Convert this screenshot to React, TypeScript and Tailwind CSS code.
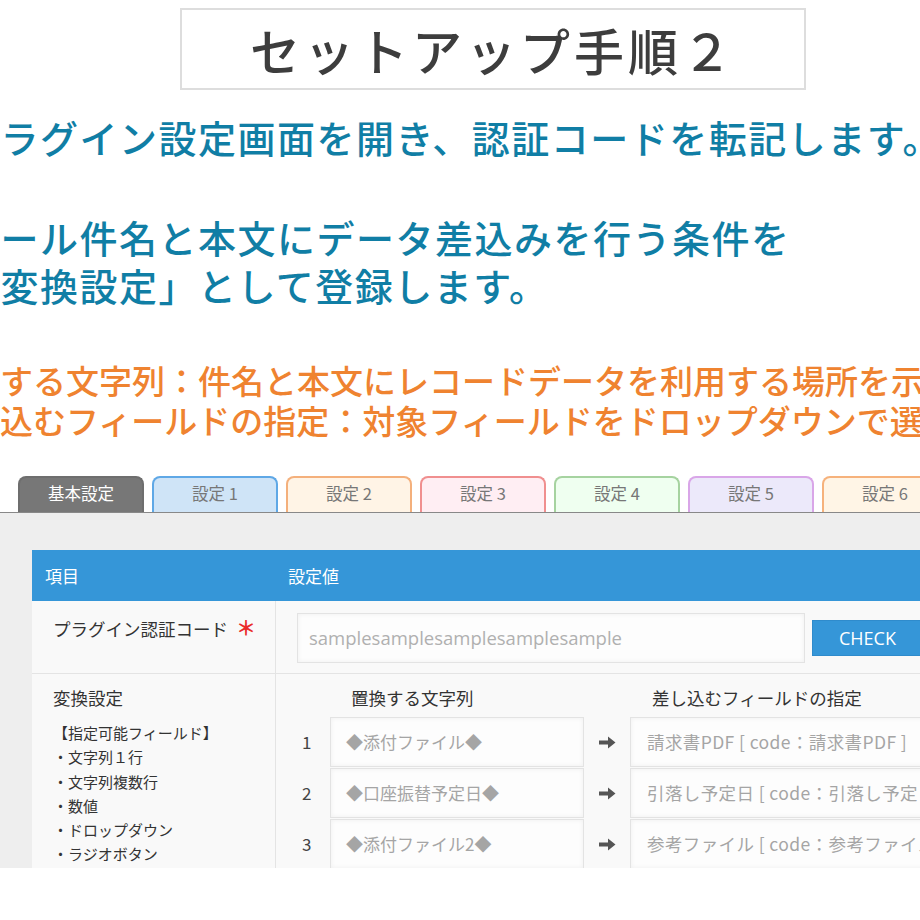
const jp = { fontFamily: '"Noto Sans CJK JP", "Noto Sans", sans-serif' }

const tabs = [
  { label: '基本設定', cls: 'bg-[#777777] border-[#6e6e6e] text-white' },
  { label: '設定 1', cls: 'bg-[#cfe4f7] border-[#5fa8e6] text-[#777777]' },
  { label: '設定 2', cls: 'bg-[#fff4e6] border-[#f4b07c] text-[#777777]' },
  { label: '設定 3', cls: 'bg-[#ffeef3] border-[#f08f8f] text-[#777777]' },
  { label: '設定 4', cls: 'bg-[#effff0] border-[#a6d3a0] text-[#777777]' },
  { label: '設定 5', cls: 'bg-[#ece9fa] border-[#d9a6e8] text-[#777777]' },
  { label: '設定 6', cls: 'bg-[#fff5e6] border-[#f6b27c] text-[#777777]' },
]

const rows = [
  { n: '1', from: '◆添付ファイル◆', to: '請求書PDF [ code：請求書PDF ]' },
  { n: '2', from: '◆口座振替予定日◆', to: '引落し予定日 [ code：引落し予定日 ]' },
  { n: '3', from: '◆添付ファイル2◆', to: '参考ファイル [ code：参考ファイル ]' },
]

const fields = ['・文字列１行', '・文字列複数行', '・数値', '・ドロップダウン', '・ラジオボタン', '・チェックボックス']

function Arrow() {
  return (
    <svg width="17" height="13" viewBox="0 0 17 13">
      <path d="M0 4.5 H9 V0.5 L16.5 6.5 L9 12.5 V8.5 H0 Z" fill="#555555" />
    </svg>
  )
}

export default function App() {
  return (
    <div className="w-[920px] h-[920px] overflow-hidden bg-white" style={jp}>
      {/* title */}
      <div className="mt-[8px] ml-[180px] w-[626px] h-[82px] border-2 border-[#dddddd] flex items-center justify-center">
        <span className="text-[50px] leading-none tracking-[4px] font-medium text-[#3d3d3d]">セットアップ手順２</span>
      </div>

      {/* blue */}
      <div className="mt-[23px] text-[38px] leading-[48px] font-medium text-[#107ea5] whitespace-nowrap tracking-[1.5px]">
        <div className="ml-[-39px]">プラグイン設定画面を開き、認証コードを転記します。</div>
        <div className="ml-[-39px] mt-[52px]">メール件名と本文にデータ差込みを行う条件を</div>
        <div className="ml-[-39px]">「変換設定」として登録します。</div>
      </div>

      {/* orange */}
      <div className="mt-[51px] text-[33px] leading-[40px] font-medium text-[#ef8330] whitespace-nowrap">
        <div className="ml-[-66px]">置換する文字列：件名と本文にレコードデータを利用する場所を示します。</div>
        <div className="ml-[-66px]">差し込むフィールドの指定：対象フィールドをドロップダウンで選択します。</div>
      </div>

      {/* tabs */}
      <div className="mt-[36px] flex gap-[8px] pl-[18px] border-b border-[#888888] h-[37px] overflow-hidden">
        {tabs.map((t) => (
          <div
            key={t.label}
            className={`shrink-0 w-[126px] h-[40px] rounded-t-[8px] border-2 border-b-0 flex justify-center pt-[3px] text-[16.5px] ${t.cls}`}
          >
            {t.label}
          </div>
        ))}
      </div>

      {/* panel */}
      <div className="h-[355px] bg-[#eeeeee] overflow-hidden pt-[37px] pl-[32px]">
        <div className="w-[1000px] bg-[#f9f9f9] text-[#333333]">
          <div className="h-[51px] bg-[#3596d8] flex items-center text-white text-[17px]">
            <div className="w-[244px] pl-[13px]">項目</div>
            <div className="pl-[12px]">設定値</div>
          </div>

          <div className="flex h-[73px] border-b border-[#e4e4e4]">
            <div className="w-[244px] shrink-0 pl-[21px] pt-[12px] text-[17.5px] border-r border-[#e4e4e4]">
              プラグイン認証コード<span className="ml-[8px] text-[20px] font-bold text-[#ea2a2a]">＊</span>
            </div>
            <div className="flex pl-[21px] pt-[12px]">
              <div className="w-[508px] h-[50px] border border-[#e3e3e3] bg-[#fdfdfd] shadow-[inset_0_0_5px_rgba(0,0,0,0.06)] flex items-center pl-[11px] text-[18.5px] text-[#b0b0b0]" style={{ fontFamily: '"Open Sans", sans-serif' }}>
                samplesamplesamplesamplesample
              </div>
              <div className="ml-[7px] mt-[7px] w-[120px] h-[36px] bg-[#3596d8] border border-[#2f8bcc] flex items-center pl-[26px] text-white text-[18px]" style={{ fontFamily: '"Open Sans", sans-serif' }}>
                CHECK
              </div>
            </div>
          </div>

          <div className="flex">
            <div className="w-[244px] shrink-0 pl-[21px] pt-[12px] border-r border-[#e4e4e4]">
              <div className="text-[17.5px] leading-[24px]">変換設定</div>
              <div className="mt-[11px] text-[15px] leading-[24.3px]">
                <div>【指定可能フィールド】</div>
                {fields.map((f) => (
                  <div key={f}>{f}</div>
                ))}
              </div>
            </div>
            <div className="pl-[21px] pt-[12px]">
              <div className="flex text-[17.5px] leading-[24px] text-[#333333]">
                <div className="w-[355px] pl-[54px]">置換する文字列</div>
                <div>差し込むフィールドの指定</div>
              </div>
              <div className="mt-[7px] flex flex-col gap-[1px]">
                {rows.map((r) => (
                  <div key={r.n} className="flex items-center h-[50px]">
                    <div className="w-[33px] pl-[5px] text-[17px] text-[#444444]">{r.n}</div>
                    <div className="w-[254px] h-[50px] border border-[#e3e3e3] bg-[#fdfdfd] shadow-[inset_0_0_5px_rgba(0,0,0,0.06)] flex items-center pl-[15px] text-[17px] text-[#a5a5a5]">
                      {r.from}
                    </div>
                    <div className="w-[46px] flex justify-center">
                      <Arrow />
                    </div>
                    <div className="w-[320px] h-[50px] border border-[#e3e3e3] bg-[#fdfdfd] shadow-[inset_0_0_5px_rgba(0,0,0,0.06)] flex items-center pl-[16px] text-[17.5px] tracking-[0.4px] text-[#a5a5a5] whitespace-nowrap overflow-hidden">
                      {r.to}
                    </div>
                  </div>
                ))}
              </div>
            </div>
          </div>
        </div>
      </div>
    </div>
  )
}
